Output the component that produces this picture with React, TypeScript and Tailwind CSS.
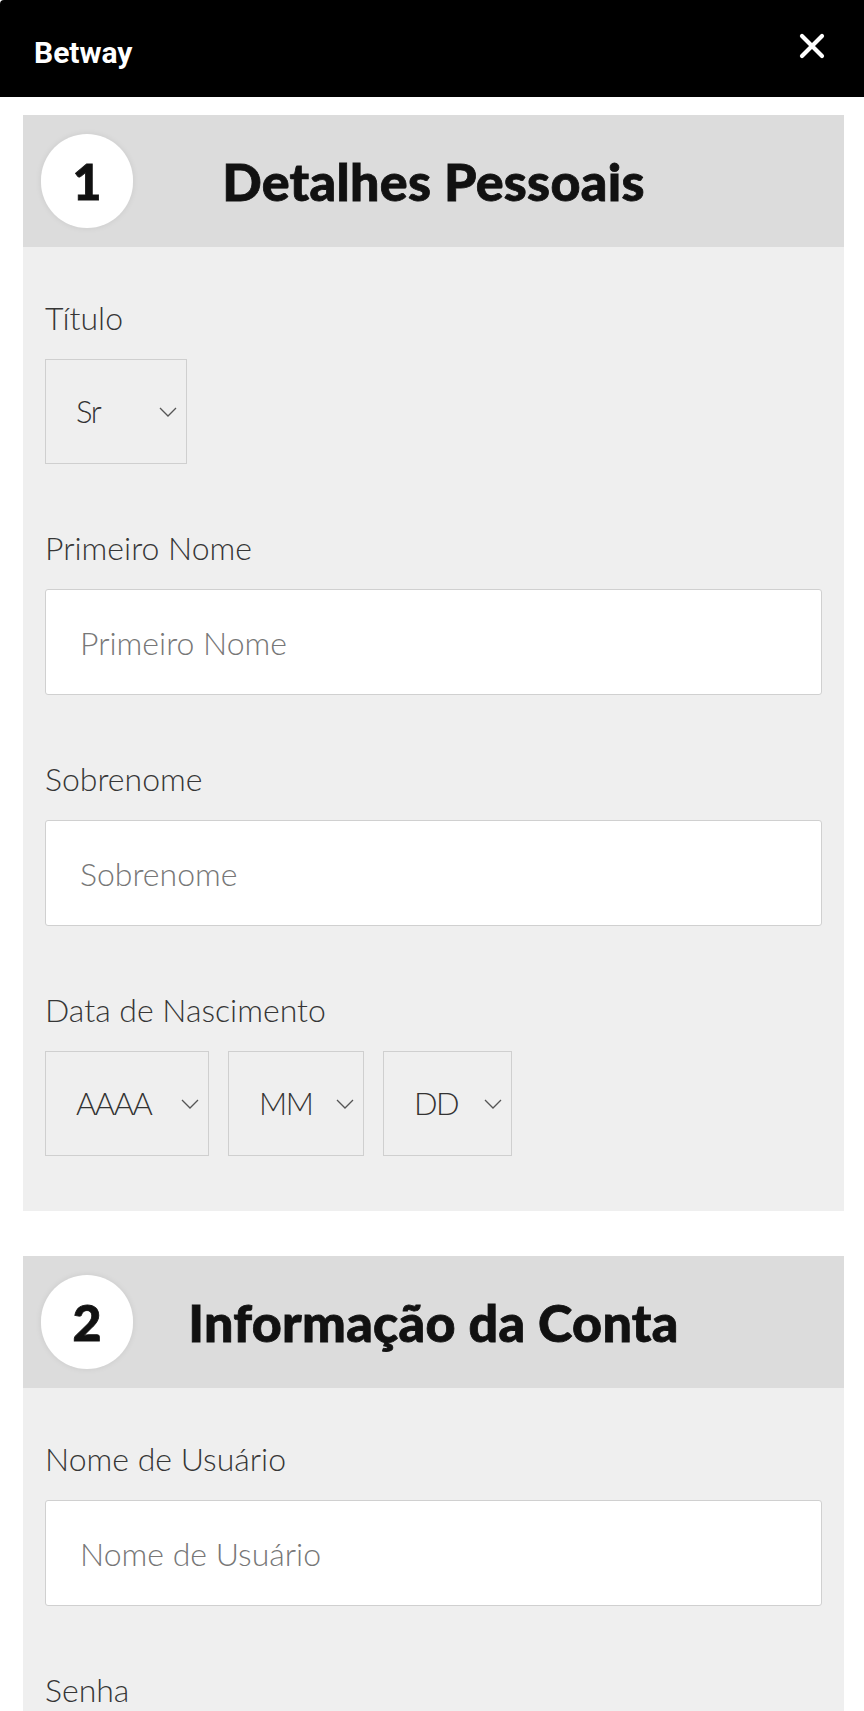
import React from "react";

const LABEL = "block text-[32px] leading-[40px] font-light text-[#363636] mb-[21px]";

function Chevron() {
  return (
    <svg width="18" height="10" viewBox="0 0 18 10" fill="none" className="shrink-0">
      <path d="M1 1l8 8 8-8" stroke="#555" strokeWidth="1.3" />
    </svg>
  );
}

function FakeSelect({ value, width }: { value: string; width: string }) {
  return (
    <div
      className={`${width} h-[105px] border border-[#cfcfcf] flex items-center justify-between pl-[30px] pr-[9px] text-[31px] tracking-[-1.5px] font-light text-[#333]`}
    >
      <span>{value}</span>
      <Chevron />
    </div>
  );
}

function TextField({ label, mt, type }: { label: string; mt: string; type?: string }) {
  return (
    <div className={mt}>
      <label className={LABEL}>{label}</label>
      <input
        type={type ?? "text"}
        placeholder={label}
        className="w-full h-[106px] bg-white border border-[#d0d0d0] rounded-[3px] pl-[34px] text-[32px] font-light text-[#333] placeholder:text-[#777] outline-none"
      />
    </div>
  );
}

function SectionHeader({ step, title }: { step: string; title: string }) {
  return (
    <div className="relative h-[132px] bg-[#dcdcdc] flex items-center justify-center">
      <div className="absolute left-[18px] top-[19px] w-[92px] h-[94px] rounded-full bg-white shadow-[0_0_6px_rgba(0,0,0,0.08)] flex items-center justify-center">
        <span className="text-[50px] font-black text-[#111] leading-none [-webkit-text-stroke:0.8px_#111]">{step}</span>
      </div>
      <h2 className="text-[52px] font-black tracking-[0.3px] text-[#111] leading-none [-webkit-text-stroke:0.8px_#111]">
        {title}
      </h2>
    </div>
  );
}

export default function App() {
  return (
    <div className="min-h-[1711px] bg-white font-['Lato',sans-serif]">
      <header className="h-[97px] bg-black rounded-tl-[4px] flex items-center justify-between pl-[34px] pr-[39px]">
        <span className="mt-[8px] text-[30px] font-bold text-white font-['Roboto',sans-serif]">Betway</span>
        <svg width="26" height="26" viewBox="0 0 26 26" className="-mt-[5px]">
          <path d="M3 3l20 20M23 3L3 23" stroke="white" strokeWidth="4.2" strokeLinecap="round" />
        </svg>
      </header>

      <main className="pt-[18px] pl-[23px] pr-[20px]">
        <section>
          <SectionHeader step="1" title="Detalhes Pessoais" />
          <div className="bg-[#efefef] px-[22px] pt-[51px] pb-[55px]">
            <div>
              <label className={LABEL}>Título</label>
              <FakeSelect value="Sr" width="w-[142px]" />
            </div>
            <TextField label="Primeiro Nome" mt="mt-[64px]" />
            <TextField label="Sobrenome" mt="mt-[64px]" />
            <div className="mt-[64px]">
              <label className={LABEL}>Data de Nascimento</label>
              <div className="flex gap-[19px]">
                <FakeSelect value="AAAA" width="w-[164px]" />
                <FakeSelect value="MM" width="w-[136px]" />
                <FakeSelect value="DD" width="w-[129px]" />
              </div>
            </div>
          </div>
        </section>

        <section className="mt-[45px]">
          <SectionHeader step="2" title="Informação da Conta" />
          <div className="bg-[#efefef] px-[22px] pt-[51px] pb-[55px]">
            <TextField label="Nome de Usuário" mt="mt-0" />
            <TextField label="Senha" mt="mt-[64px]" type="password" />
          </div>
        </section>
      </main>
    </div>
  );
}
